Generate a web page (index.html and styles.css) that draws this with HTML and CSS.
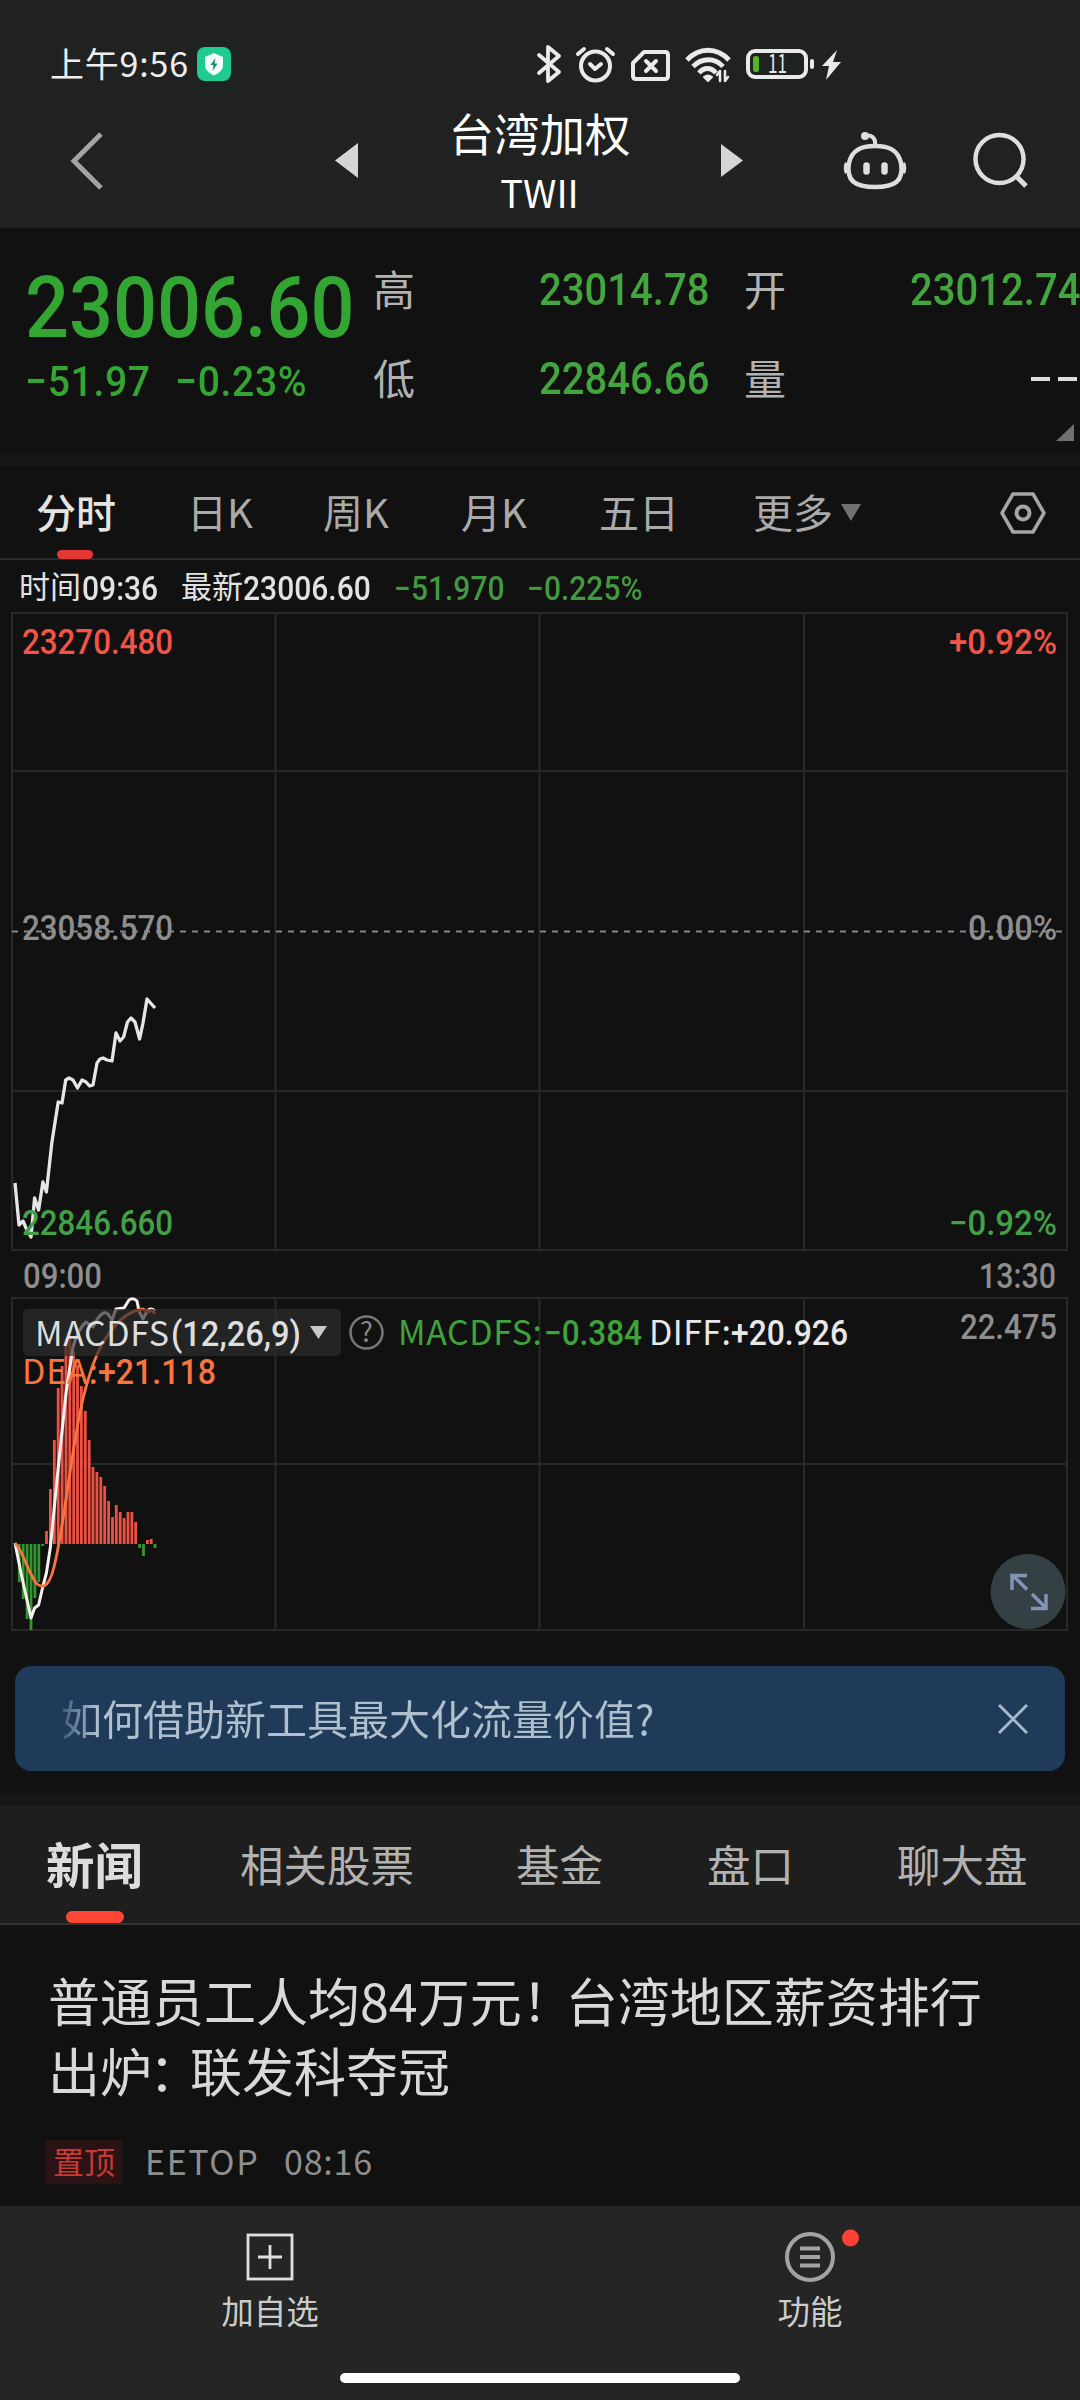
FILE: index.html
```html
<!DOCTYPE html>
<html lang="zh-CN">
<head>
<meta charset="utf-8">
<title>台湾加权 TWII</title>
<link rel="stylesheet" href="styles.css">
</head>
<body>
<main class="screen">
  <header class="top">
    <div class="status">
      <span class="clock">上午9:56</span>
      <svg class="guard" width="34" height="34" viewBox="0 0 34 34"><rect width="34" height="34" rx="8" fill="#1fcb8f"/><path d="M17 6l9 4v8c0 5-4 8-9 10.500c-5-2.500-9-5.500-9-10.500v-8z" fill="#f0fffa"/><path d="M18.500 11l-5 7h3l-1 6 5-7.500h-3z" fill="#178a66"/></svg>
      <svg class="indicators" width="320" height="46" viewBox="535 41 320 46" fill="none" stroke="#e9ebea" stroke-width="4" stroke-linecap="round" stroke-linejoin="round">
        <path d="M539 55l20 17-11 9V47l11 9-20 17" stroke-width="3.800"/>
        <circle cx="595.500" cy="66" r="14.500"/><path d="M590 64l5 5 6-5M578 54l6-5M613 54l-6-5"/>
        <path d="M644 52h21q3 0 3 3v21q0 3-3 3h-29q-3 0-3-3V63z"/><path d="M646 61l10 10M656 61l-10 10"/>
        <path d="M687 60c12-13 30-13 42 0" stroke-width="4.800" stroke-linecap="butt"/><path d="M693 66.500c9-9 22-9 30 0M699 73c5-6 12-6 17 0" stroke-width="4.800" stroke-linecap="butt"/><path d="M704 77q4-3 8 0l-4 4z" fill="#e9ebea" stroke-width="2"/><path d="M720 81V71l-3 4M725 71v10l3-4" stroke-width="2.500"/>
        <rect x="748" y="51" width="58" height="26" rx="7"/><rect x="753" y="56" width="6" height="16" rx="2.500" fill="#55b421" stroke="none"/><path d="M812 61v6"/>
        <path d="M837 50l-15 16h7l-3 14 15-18h-8z" fill="#e9ebea" stroke="none"/>
        <text x="768" y="73" class="battery" textLength="19" lengthAdjust="spacingAndGlyphs">11</text>
      </svg>
    </div>
    <nav class="titlebar">
      <svg class="back" width="38" height="62" viewBox="0 0 38 62"><path d="M34 4L7 31l27 27" fill="none" stroke="#a2a3a3" stroke-width="5"/></svg>
      <svg class="prev" width="23" height="36"><path d="M23 0v35L0 17.500z" fill="#d4d5d5"/></svg>
      <h1 class="title"><span>台湾加权</span><small>TWII</small></h1>
      <svg class="next" width="22" height="34"><path d="M0 0v33L22 16.500z" fill="#d4d5d5"/></svg>
      <svg class="robot" width="66" height="62" viewBox="0 0 66 62" fill="none" stroke="#dddede"><path d="M33 17c14 0 23 4 26 17 3 18-6 24-26 24S4 52 7 34c3-13 12-17 26-17z" stroke-width="4.500"/><path d="M33 16c1-7-4-11-10-9" stroke-linecap="round" stroke-width="4"/><circle cx="23" cy="7" r="4" fill="#dddede" stroke="none"/><path d="M5 34q-2 5 0 10M61 34q2 5 0 10" stroke-width="4.500"/><path d="M24.500 36.500v6M42.500 36.500v6" stroke-linecap="round" stroke-width="6.500"/></svg>
      <svg class="search" width="58" height="58" viewBox="0 0 58 58" fill="none" stroke="#dddede" stroke-width="4.500"><circle cx="27.500" cy="28" r="24"/><path d="M44 45l10 10" stroke-width="5"/></svg>
    </nav>
  </header>

  <section class="quote">
    <div class="price">
      <div class="last din">23006.60</div>
      <div class="change"><span class="din">−51.97</span><span class="din">−0.23%</span></div>
    </div>
    <dl class="stats">
      <dt>高</dt><dd><span class="din">23014.78</span></dd>
      <dt>开</dt><dd><span class="din">23012.74</span></dd>
      <dt>低</dt><dd><span class="din">22846.66</span></dd>
      <dt>量</dt><dd><span class="empty"><i></i><i></i></span></dd>
    </dl>
    <svg class="corner" width="18" height="18"><path d="M18 0v17H0z" fill="#707070"/></svg>
  </section>

  <nav class="periods">
    <span class="period on">分时</span><span class="period">日K</span><span class="period">周K</span><span class="period">月K</span><span class="period">五日</span><span class="period">更多<svg width="22" height="18"><path d="M1 0h20L11 17z" fill="#717171"/></svg></span>
    <svg class="settings" width="46" height="44" viewBox="0 0 46 44" fill="none" stroke="#a5a5a5"><path d="M13 3h20l11 19-11 19H13L2 22z" stroke-width="3.500" stroke-linejoin="round"/><circle cx="23" cy="22" r="6.500" stroke-width="4"/></svg>
  </nav>

  <section class="chart">
    <div class="readout">
      <span>时间</span><b class="din">09:36</b><span>最新</span><b class="din">23006.60</b><b class="din fall">−51.970</b><b class="din fall">−0.225%</b>
    </div>
    <svg class="plot" width="1080" height="1022" viewBox="0 612 1080 1022">
      <g fill="none" stroke="#282828" stroke-width="2">
        <path d="M12 613H1067V1250H12zM12 771H1067M12 1091H1067"/>
        <path d="M275.500 613V1250M539.500 613V1250M804 613V1250"/>
        <path d="M12 1298H1067V1630H12zM12 1464H1067M275.500 1298V1630M539.500 1298V1630M804 1298V1630"/>
      </g>
      <path d="M12 931.500H1062" stroke="#858585" stroke-width="2" stroke-dasharray="6 6"/>
      <polyline fill="none" stroke="#e6e6e6" stroke-width="3.300" stroke-linejoin="round" points="15,1183 19,1225 23,1221 26,1228 31,1237 34.600,1198 38.600,1210 42.900,1182 46.400,1192 51.800,1143 58.200,1102 62,1103 65.700,1080 69,1078 73,1080 77.500,1088 82,1080 86,1082 89.600,1086 93,1085 97,1063 100,1059 103,1058 107,1060 112,1061 116,1033 120,1041 123.600,1037 127.500,1022 131,1018 135,1022 139.600,1039 143,1023 147,999 155,1008"/>
      <g stroke-width="2.800">
        <path stroke="#329631" d="M19.300 1544V1582M23.200 1544V1599M27.100 1544V1619M31 1544V1630M34.900 1544V1598M38.800 1544V1582M42.700 1544V1546M139.600 1544V1548M143.500 1544V1556M155 1544V1548"/>
        <path stroke="#ee5143" d="M46.500 1544V1531M50.400 1544V1489M54.300 1544V1440M58.200 1544V1388M62.100 1544V1366M66 1544V1342M69.800 1544V1338M73.700 1544V1352M77.500 1544V1365M81.400 1544V1386M85.300 1544V1411M89.200 1544V1440M93 1544V1467M96.900 1544V1472M100.800 1544V1477M104.700 1544V1486M108.600 1544V1501M112.500 1544V1517M116.300 1544V1505M120.200 1544V1512M124.100 1544V1518M128 1544V1512M131.900 1544V1512M135.700 1544V1522M147.400 1544V1540M151.200 1544V1539"/>
      </g>
      <path fill="none" stroke="#f7f0ee" stroke-width="3" stroke-linejoin="round" d="M15 1543L21 1573 31 1618 34.600 1608 38.600 1605 42.500 1588 46.400 1573 50.400 1547 57 1480 66 1393 73 1347Q78 1329 86 1322L93 1327 98 1318Q104 1310 108 1314L112 1320 116 1309 124 1308 129 1300Q133 1297 137 1301L139 1311 143 1319 147 1311Q151 1307 155 1311"/>
      <path fill="none" stroke="#f97441" stroke-width="2.800" stroke-linejoin="round" d="M15 1543C24 1552 29 1576 37 1584C45 1590 50 1583 54 1567C64 1528 70 1458 82 1403C92 1360 102 1341 114 1327C124 1315 134 1310 143 1309L148 1312 152 1310 155 1314"/>
      <rect x="23" y="1309" width="318" height="47" rx="5" fill="#2e2e2e" fill-opacity=".68"/>
      <path d="M310 1326h17l-8.500 13z" fill="#c8c8c8"/>
      <circle cx="366.500" cy="1332.500" r="16" fill="none" stroke="#777" stroke-width="2.500"/>
      <text x="366.500" y="1342" text-anchor="middle" class="lbl" fill="#888" font-size="27">?</text>
      <g class="num">
        <text x="22" y="654" textLength="151" lengthAdjust="spacingAndGlyphs" fill="#f15547">23270.480</text>
        <text x="949" y="654" textLength="108" lengthAdjust="spacingAndGlyphs" fill="#f15547">+0.92%</text>
        <text x="22" y="940" textLength="151" lengthAdjust="spacingAndGlyphs">23058.570</text>
        <text x="968" y="940" textLength="89" lengthAdjust="spacingAndGlyphs">0.00%</text>
        <text x="22" y="1235" textLength="151" lengthAdjust="spacingAndGlyphs" fill="#43a047">22846.660</text>
        <text x="949" y="1235" textLength="108" lengthAdjust="spacingAndGlyphs" fill="#43a047">−0.92%</text>
        <text x="23" y="1288" textLength="79" lengthAdjust="spacingAndGlyphs">09:00</text>
        <text x="979" y="1288" textLength="77" lengthAdjust="spacingAndGlyphs">13:30</text>
        <text x="960" y="1339" textLength="97" lengthAdjust="spacingAndGlyphs">22.475</text>
        <text x="171" y="1346" textLength="130" lengthAdjust="spacingAndGlyphs" fill="#dedede">(12,26,9)</text>
        <text x="544" y="1345" textLength="98" lengthAdjust="spacingAndGlyphs" fill="#3fa33b">−0.384</text>
        <text x="731" y="1345" textLength="117" lengthAdjust="spacingAndGlyphs" fill="#e8e8e8">+20.926</text>
        <text x="98" y="1384" textLength="118" lengthAdjust="spacingAndGlyphs" fill="#f97540">+21.118</text>
      </g>
      <g class="lbl">
        <text x="35" y="1346" textLength="134" fill="#dedede">MACDFS</text>
        <text x="398" y="1345" textLength="144" fill="#3fa33b">MACDFS:</text>
        <text x="649" y="1345" textLength="82" fill="#e8e8e8">DIFF:</text>
        <text x="22" y="1384" textLength="76" fill="#f97540">DEA:</text>
      </g>
      <circle cx="1028" cy="1591.500" r="37.500" fill="#344044"/>
      <path d="M1027 1589.500l-14-14M1012 1590v-14.500h15M1032 1594l14 14M1046 1594v14.500h-15" fill="none" stroke="#8492b8" stroke-width="3.500"/>
    </svg>
  </section>

  <aside class="banner">
    <span>如何借助新工具最大化流量价值?</span>
    <svg width="30" height="30"><path d="M1 1l28 28M29 1L1 29" stroke="#a9b8c8" stroke-width="3"/></svg>
  </aside>

  <nav class="sections">
    <b>新闻</b><span>相关股票</span><span>基金</span><span>盘口</span><span>聊大盘</span>
  </nav>

  <article class="news">
    <h2>普通员工人均84万元<span class="punct">！</span>台湾地区薪资排行<br>出炉<span class="punct colon">：</span>联发科夺冠</h2>
    <p><em>置顶</em><span class="source">EETOP</span><time>08:16</time></p>
  </article>

  <footer class="dock">
    <div class="actions">
      <a class="action"><svg width="60" height="60" viewBox="0 0 60 60" fill="none" stroke="#e0e0e0" stroke-width="2.800"><rect x="8" y="8" width="44" height="44"/><path d="M30 18v24M18 30h24"/></svg>加自选</a>
      <a class="action"><svg class="func" width="100" height="60" viewBox="0 0 100 60" fill="none" stroke="#a3a3a3" stroke-width="4"><circle cx="50" cy="30" r="23"/><path d="M40 21.500h20M40 30h20M40 38.500h20"/><circle cx="90.500" cy="11" r="8.500" fill="#ff4235" stroke="none"/></svg>功能</a>
    </div>
    <div class="home"></div>
  </footer>
</main>
</body>
</html>
```

FILE: styles.css
```css
* { box-sizing: border-box; }

body {
  margin: 0;
  background: #111;
  color: #ddd;
  font-family: "Noto Sans CJK SC", "Noto Sans", sans-serif;
}

svg { display: block; flex: none; }
h1, h2, p, dl, dd { margin: 0; font-weight: 400; }

.screen {
  width: 1080px;
  height: 2400px;
  overflow: hidden;
  display: flex;
  flex-direction: column;
}

.screen > * { flex: none; }

/* Narrow digits used for every quoted figure */
.din {
  display: block;
  font-family: Roboto, sans-serif;
  font-weight: 500;
  white-space: nowrap;
  transform: scaleX(.91);
  transform-origin: left center;
}

/* Status bar and title */
.top { height: 228px; background: #202221; }

.status {
  display: flex;
  align-items: center;
  height: 102px;
  padding: 26px 0 0 50px;
}

.clock {
  width: 147px;
  font-size: 34px;
  line-height: 40px;
  letter-spacing: .8px;
  color: #eee;
  margin-top: -2px;
}

.indicators { margin-left: 304px; }
.battery { font: 400 25px "Noto Sans CJK SC", sans-serif; fill: #e9ebea; stroke: none; }

.titlebar { display: flex; height: 126px; }
.back { margin: 28px 0 0 67px; }
.prev { margin: 41px 0 0 230px; }

.title {
  width: 363px;
  display: flex;
  flex-direction: column;
  align-items: center;
  color: #fff;
  font-size: 45.5px;
  line-height: 60px;
}

.title small { font-size: 38px; line-height: 56px; margin-top: 2px; }
.next { margin: 42px 0 0 0; }
.robot { margin: 27px 0 0 99px; }
.search { margin: 29px 0 0 64px; }

/* Quote panel */
.quote { display: flex; height: 227px; padding-top: 30px; position: relative; }
.price { width: 373px; padding-left: 25px; color: #33a532; }
.last { font-size: 86px; line-height: 100px; transform: scaleX(.9); }

.change {
  display: grid;
  grid-template-columns: 150px auto;
  margin-top: -3px;
  font-size: 43px;
  line-height: 52px;
  letter-spacing: .7px;
}

.stats {
  display: grid;
  grid-template-columns: 166px 205px 166px 170px;
  grid-template-rows: 89px 89px;
}

.stats dt { font-size: 42px; line-height: 62px; margin-top: -1px; color: #b2b2b2; }
.stats dd { font-size: 44px; line-height: 65px; color: #43a53e; }
.empty { display: flex; gap: 8px; padding: 30px 0 0 121px; }
.empty i { width: 19px; height: 4px; background: #ddd; }
.corner { position: absolute; right: 6px; bottom: 13px; }

/* Chart period tabs */
.periods {
  display: flex;
  height: 105px;
  padding-left: 36px;
  border-top: 11px solid #171717;
  border-bottom: 2px solid #2c2c2c;
  font-size: 40px;
  line-height: 90px;
  color: #aaa;
}

.period { width: 133px; }
.period:nth-child(1) { width: 151px; }
.period:nth-child(2) { width: 136px; }
.period:nth-child(3) { width: 138px; }
.period:nth-child(4) { width: 138px; }
.period:nth-child(5) { width: 154px; }
.period:nth-child(6) { width: 247px; display: flex; gap: 7px; }
.period:nth-child(6) svg { margin-top: 38px; }
.on { color: #e4e4e4; font-weight: 500; }

.on::after {
  content: "";
  display: block;
  width: 36px;
  height: 9px;
  margin: -6px 0 0 21px;
  border-radius: 5px;
  background: #e53835;
}

.settings { margin-top: 25px; }

/* Time-share and MACD charts */
.readout {
  display: grid;
  grid-template-columns: 63px 99px 62px 151px 133px auto;
  height: 52px;
  padding-left: 19px;
  font-size: 31px;
  line-height: 50px;
  color: #e2e2e2;
}

.readout .din { font-size: 33px; line-height: 57px; }
.readout .fall { color: #43993f; }
.num { font: 500 34.5px Roboto, sans-serif; fill: #8e8e8e; }
.lbl { font-family: "Noto Sans CJK SC", sans-serif; font-size: 34px; }
text.lbl { font-size: 27px; }

/* Promotion */
.banner {
  display: flex;
  justify-content: space-between;
  align-items: center;
  width: 1050px;
  height: 105px;
  margin: 32px 15px 22px;
  padding: 0 37px 0 46px;
  border-radius: 16px;
  background: #1f3b59;
  font-size: 41px;
  line-height: 60px;
}

.banner span {
  margin-top: -4px;
  color: transparent;
  background: linear-gradient(90deg, #3d5872, #b0bfce 36px);
  background-clip: text;
}

/* News */
.sections {
  display: flex;
  height: 132px;
  border-top: 12px solid #171717;
  border-bottom: 2px solid #343434;
  background: #1e1e1e;
  padding-left: 46px;
  font-size: 43.5px;
  line-height: 118px;
  color: #b2b2b2;
}

.sections b { width: 194px; font-size: 48.5px; line-height: 116px; color: #ddd; }

.sections b::after {
  content: "";
  display: block;
  width: 58px;
  height: 12px;
  margin: -10px 0 0 20px;
  border-radius: 6px;
  background: #ff4635;
}

.sections span:nth-child(2) { width: 276px; }
.sections span:nth-child(3) { width: 191px; }
.sections span:nth-child(4) { width: 190px; }

.news { height: 281px; padding: 40px 0 0 48px; }
.news h2 { font-size: 52px; line-height: 70px; color: #d9d9d9; white-space: nowrap; }
.punct { margin-right: -8px; }
.colon { margin: 0 -11px 0 -3px; }

.news p {
  display: flex;
  align-items: center;
  margin: 35px 0 0 -2px;
  color: #8f8f8f;
  font-size: 34px;
  line-height: 42px;
}

.news em {
  width: 76px;
  height: 44px;
  text-align: center;
  font-style: normal;
  font-size: 31px;
  line-height: 41px;
  background: #2b1315;
  color: #c83a33;
}

.source { width: 139px; margin: -2px 0 0 23px; letter-spacing: 1.6px; }
.news time { margin-top: -2px; letter-spacing: .8px; }

/* Bottom actions */
.dock { height: 194px; background: #252525; }
.actions { display: grid; grid-template-columns: 1fr 1fr; height: 167px; padding-top: 21px; }
.action { display: flex; flex-direction: column; align-items: center; font-size: 32.5px; line-height: 46px; color: #ccc; }
.home { width: 400px; height: 10px; margin: 0 auto; border-radius: 5px; background: #fff; }
```
